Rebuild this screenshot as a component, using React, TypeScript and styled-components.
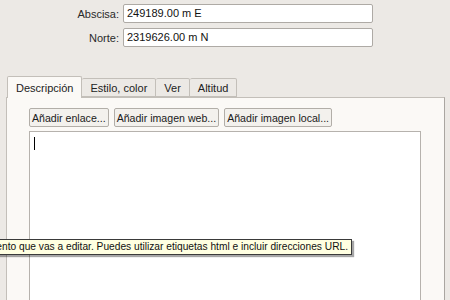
import styled, { createGlobalStyle } from "styled-components";

const GlobalStyle = createGlobalStyle`
  html, body {
    margin: 0;
    padding: 0;
    width: 450px;
    height: 300px;
    overflow: hidden;
    background: #ece9e5;
    font-family: "Liberation Sans", Tahoma, sans-serif;
    font-size: 11px;
    color: #1a1a1a;
  }
`;

const Page = styled.div`
  position: relative;
  width: 450px;
  height: 300px;
  overflow: hidden;
`;

const Form = styled.div`
  display: grid;
  grid-template-columns: 119px 250px;
  column-gap: 4px;
  row-gap: 5px;
  padding-top: 4px;
  align-items: center;
`;

const Label = styled.label`
  text-align: right;
  color: #2a2a2a;
`;

const Field = styled.div`
  height: 17px;
  background: #fff;
  border: 1px solid #aeaaa5;
  border-radius: 2px;
  padding-left: 3px;
  line-height: 17px;
  color: #111;
`;

const TabBar = styled.div`
  display: flex;
  align-items: flex-end;
  margin-top: 29px;
  padding-left: 7px;
  height: 21px;
  position: relative;
  z-index: 1;
`;

const Tab = styled.div<{ $active?: boolean }>`
  box-sizing: border-box;
  height: ${(p) => (p.$active ? "22px" : "19px")};
  padding: 0 8px;
  margin-bottom: ${(p) => (p.$active ? "-1px" : "0")};
  display: flex;
  align-items: center;
  justify-content: center;
  background: ${(p) => (p.$active ? "#fbf9f6" : "#ece9e5")};
  border: 1px solid #c3bfb9;
  border-bottom: ${(p) => (p.$active ? "none" : "1px solid #c3bfb9")};
  border-left: ${(p) => (p.$active ? "1px solid #c3bfb9" : "none")};
  border-radius: 2px 2px 0 0;
  color: #222;
  font-size: 11px;
  &:first-child {
    border-left: 1px solid #c3bfb9;
  }
`;

const Pane = styled.div`
  margin-left: 6px;
  width: 439px;
  height: 220px;
  box-sizing: border-box;
  background: #fbf9f6;
  border: 1px solid #c3bfb9;
  border-right-color: #aaa6a1;
  padding: 10px 0 0 22px;
`;

const ButtonRow = styled.div`
  display: flex;
  gap: 5px;
`;

const Button = styled.button`
  font-family: inherit;
  font-size: 10.6px;
  height: 19px;
  padding: 0 2px;
  background: #f3f1ed;
  border: 1px solid #b2aea8;
  border-radius: 2px;
  color: #1a1a1a;
  cursor: default;
`;

const TextArea = styled.div`
  margin-top: 4px;
  width: 392px;
  height: 200px;
  box-sizing: border-box;
  background: #fff;
  border: 1px solid #b6b2ad;
  padding: 5px 0 0 4px;
`;

const Caret = styled.span`
  display: block;
  width: 1px;
  height: 13px;
  background: #000;
`;

const Tooltip = styled.div`
  position: absolute;
  top: 239px;
  right: 98px;
  white-space: nowrap;
  background: #ffffe1;
  border: 1px solid #3a3a3a;
  padding: 0 3px;
  height: 14px;
  line-height: 14px;
  font-size: 10.2px;
  color: #111;
  box-shadow: 2px 2px 1px rgba(0, 0, 0, 0.35);
  z-index: 5;
`;

export default function App() {
  return (
    <Page>
      <GlobalStyle />
      <Form>
        <Label>Abscisa:</Label>
        <Field>249189.00 m E</Field>
        <Label>Norte:</Label>
        <Field>2319626.00 m N</Field>
      </Form>
      <TabBar>
        <Tab $active>Descripción</Tab>
        <Tab>Estilo, color</Tab>
        <Tab>Ver</Tab>
        <Tab>Altitud</Tab>
      </TabBar>
      <Pane>
        <ButtonRow>
          <Button>Añadir enlace...</Button>
          <Button>Añadir imagen web...</Button>
          <Button>Añadir imagen local...</Button>
        </ButtonRow>
        <TextArea>
          <Caret />
        </TextArea>
      </Pane>
      <Tooltip>
        Introduce la descripción del elemento que vas a editar. Puedes utilizar etiquetas html e incluir direcciones URL.
      </Tooltip>
    </Page>
  );
}
